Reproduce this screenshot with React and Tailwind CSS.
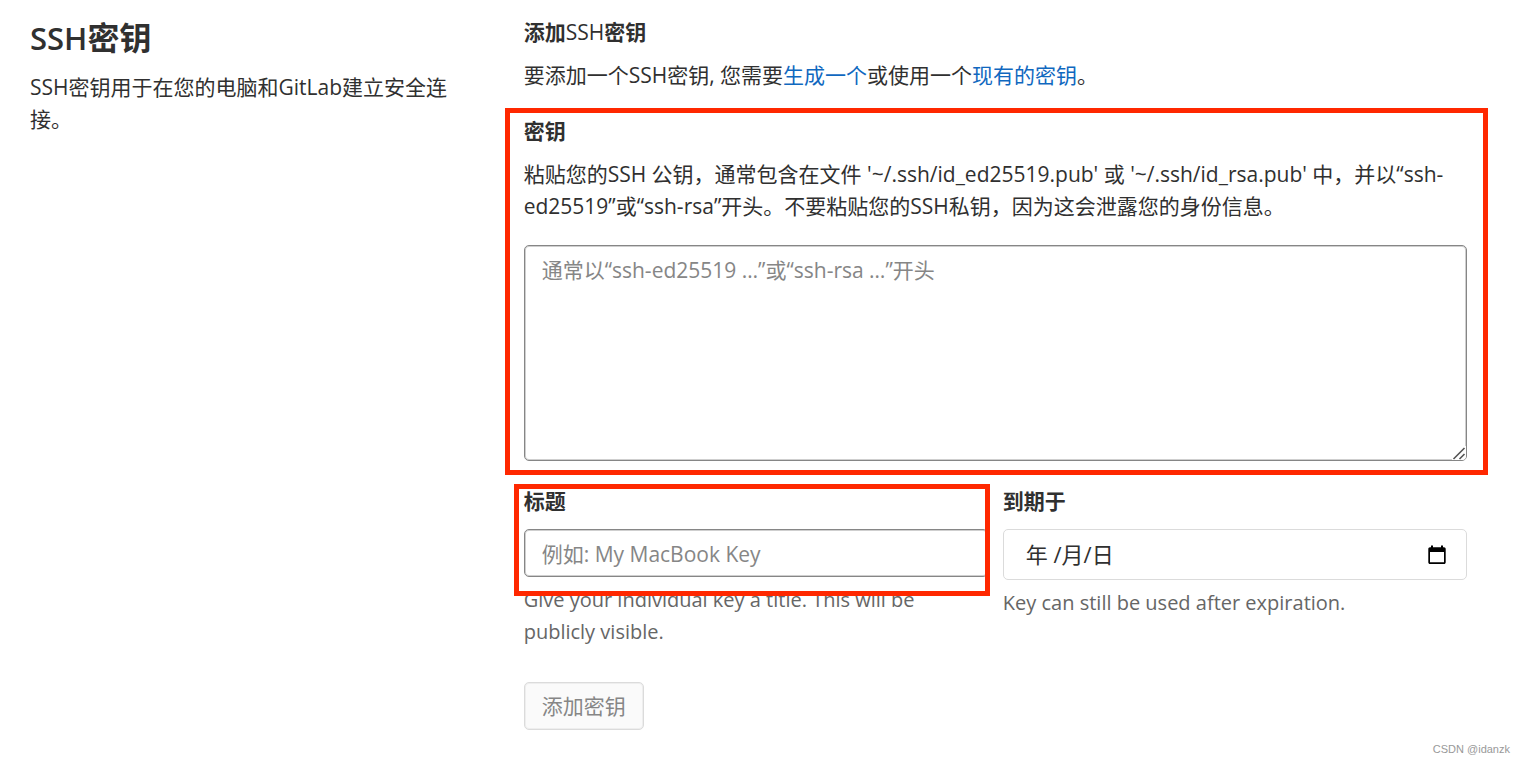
function Highlight({ className }) {
  return (
    <div
      aria-hidden="true"
      className={`pointer-events-none absolute border-5 border-[#ff2800] ${className}`}
    />
  );
}

function CalendarIcon() {
  return (
    <svg viewBox="0 0 18 20" className="h-5 w-[18px]" aria-hidden="true">
      <path
        fill="currentColor"
        d="M16 2.200h-1V.6h-2v1.600H5V.6H3v1.600H2C1 2.200.3 3 .3 4v13.200c0 1 .8 1.800 1.700 1.800h14c1 0 1.700-.8 1.700-1.800V4c0-1-.7-1.800-1.700-1.800zm0 15H2V7h14v10.200z"
      />
    </svg>
  );
}

function ResizeGrip() {
  return (
    <svg
      viewBox="0 0 14 14"
      className="pointer-events-none absolute right-px bottom-px h-[14px] w-[14px] rounded-br-[4px] bg-white"
      aria-hidden="true"
    >
      <path d="M1.500 13 12.500 2M7.500 13 12.500 8" fill="none" stroke="#555" strokeWidth="1.600" />
    </svg>
  );
}

const labelClass = "block font-bold leading-8";
const helpClass = "mt-[7px] text-[20px] leading-8 text-[#666]";
const fieldClass =
  "block w-full rounded-[5px] border border-[#868686] bg-white px-[17px] text-[#303030] shadow-[inset_0_0_0_1px_#86868666] outline-none placeholder:text-[#868686]";

export default function App() {
  return (
    <div className="bg-white font-['Open_Sans','Noto_Sans_CJK_SC',sans-serif] text-[21px] text-[#303030]">
      <main className="grid grid-cols-[1fr_2fr] gap-[22px] pt-4 pr-[57px] pl-[30px]">
        <section className="pr-8">
          <h1 className="text-[32px] leading-[44px] font-bold">
            <span className="text-[31px] font-semibold">SSH</span>密钥
          </h1>
          <p className="mt-[11px] leading-8">
            SSH密钥用于在您的电脑和GitLab建立安全连接。
          </p>
        </section>

        <form onSubmit={(e) => e.preventDefault()}>
          <h2 className="leading-8 font-bold">
            添加<span className="font-medium">SSH</span>密钥
          </h2>
          <p className="mt-[11px] leading-8">
            要添加一个SSH密钥, 您需要
            <a href="#generate" className="text-[#1068bf]">生成一个</a>
            或使用一个
            <a href="#existing" className="text-[#1068bf]">现有的密钥</a>。
          </p>

          <div className="relative mt-6">
            <label htmlFor="key" className={labelClass}>密钥</label>
            <p id="key-help" className="mt-[11px] leading-8">
              粘贴您的SSH 公钥，通常包含在文件 '~/.ssh/id_ed25519.pub' 或
              '~/.ssh/id_rsa.pub' 中，并以“ssh-ed25519”或“ssh-rsa”开头。不要粘贴您的SSH私钥，因为这会泄露您的身份信息。
            </p>
            <div className="relative mt-[23px]">
              <textarea
                id="key"
                aria-describedby="key-help"
                className={`${fieldClass} h-[216px] resize py-2 leading-8`}
                placeholder="通常以“ssh-ed25519 …”或“ssh-rsa …”开头"
              />
              <ResizeGrip />
            </div>
            <Highlight className="-top-[7px] -right-[21px] -bottom-[14px] -left-[19px]" />
          </div>

          <div className="mt-6 grid grid-cols-2 gap-[15px]">
            <div>
              <div className="relative">
                <label htmlFor="title" className={labelClass}>标题</label>
                <input
                  id="title"
                  type="text"
                  className={`${fieldClass} mt-3 h-12 pt-[2px]`}
                  placeholder="例如: My MacBook Key"
                />
                <Highlight className="-top-px -right-[2px] -bottom-[19px] -left-[10px]" />
              </div>
              <p className={helpClass}>
                Give your individual key a title. This will be publicly visible.
              </p>
            </div>
            <div>
              <label htmlFor="expires" className={labelClass}>到期于</label>
              <div className="mt-3 flex h-[51px] items-center rounded-[5px] border border-[#dbdbdb] pr-5 pl-[22px]">
                <input
                  id="expires"
                  type="text"
                  defaultValue="年 /月/日"
                  className="min-w-0 flex-1 bg-transparent text-[22px] outline-none"
                />
                <button type="button" aria-label="选择日期" className="text-black">
                  <CalendarIcon />
                </button>
              </div>
              <p className={helpClass}>Key can still be used after expiration.</p>
            </div>
          </div>

          <button
            type="submit"
            disabled
            className="mt-[34px] h-12 rounded-[5px] border border-[#dbdbdb] bg-[#fafafa] px-[17px] pt-[2px] text-[#868686] shadow-[inset_0_0_0_1px_#dbdbdb66]"
          >
            添加密钥
          </button>
        </form>
      </main>
      <footer className="mt-[11px] pr-[14px] text-right font-['Liberation_Sans',sans-serif] text-[11px] leading-4 text-[#999]">
        CSDN @idanzk
      </footer>
    </div>
  );
}
